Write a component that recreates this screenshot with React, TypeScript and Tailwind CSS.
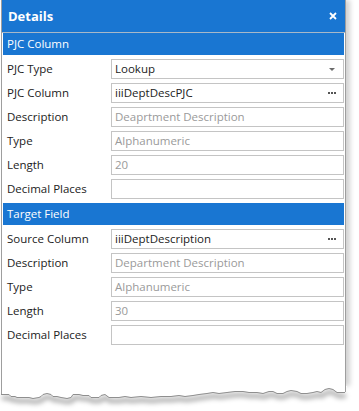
import { ReactNode } from "react";

type Row = {
  label: string;
  value?: string;
  placeholder?: string;
  kind?: "select" | "lookup";
};

const pjcRows: Row[] = [
  { label: "PJC Type", value: "Lookup", kind: "select" },
  { label: "PJC Column", value: "iiiDeptDescPJC", kind: "lookup" },
  { label: "Description", placeholder: "Deaprtment Description" },
  { label: "Type", placeholder: "Alphanumeric" },
  { label: "Length", placeholder: "20" },
  { label: "Decimal Places" },
];

const targetRows: Row[] = [
  { label: "Source Column", value: "iiiDeptDescription", kind: "lookup" },
  { label: "Description", placeholder: "Department Description" },
  { label: "Type", placeholder: "Alphanumeric" },
  { label: "Length", placeholder: "30" },
  { label: "Decimal Places" },
];

function SectionBar({ children }: { children: ReactNode }) {
  return (
    <div className="h-[22px] bg-[#1976d2] pl-[4px] flex items-center text-white text-[11.5px] leading-none">
      {children}
    </div>
  );
}

function Field({ row }: { row: Row }) {
  return (
    <div className="h-[24px] flex items-center">
      <div className="w-[108px] pl-[4px] text-[11.5px] text-[#222] leading-none">{row.label}</div>
      <div className="w-[233px] h-[20px] border border-[#c4c4c4] bg-white flex items-center pl-[3px] pr-[5px] text-[11.5px] leading-none">
        <span className={"flex-1 " + (row.value ? "text-[#222]" : "text-[#9a9a9a]")}>
          {row.value ?? row.placeholder ?? ""}
        </span>
        {row.kind === "select" && (
          <svg width="6" height="3" viewBox="0 0 6 3" className="mr-[3px]">
            <path d="M0 0H6L3 3Z" fill="#6b6b6b" />
          </svg>
        )}
        {row.kind === "lookup" && (
          <svg width="9" height="3" viewBox="0 0 9 3" className="mr-[1px]">
            <rect x="0" y="0" width="2" height="2" fill="#555" />
            <rect x="3" y="0" width="2" height="2" fill="#555" />
            <rect x="6" y="0" width="2" height="2" fill="#555" />
          </svg>
        )}
      </div>
    </div>
  );
}

function TornEdge() {
  const pts =
    "0,8 8,8 10,10 14,10 16,11 28,11 32,12 38,11 40,10 42,8 46,7 50,8 52,10 56,10 60,11 66,12 70,11 72,8 78,8 82,9 88,9 90,11 98,11 100,9 104,8 108,11 118,11 124,10 130,11 140,10 150,11 160,10 170,10 178,9 184,10 192,9 198,8 206,7 212,6 218,7 226,6 234,5 242,5 248,6 256,6 262,7 268,5 272,5 276,7 282,7 286,5 290,4 296,5 300,7 306,7 312,6 316,5 320,6 324,3 328,2 332,3 336,6 340,6 344,6";
  return (
    <svg width="359" height="26" viewBox="0 0 359 26" className="block">
      <defs>
        <filter id="blur" x="-10%" y="-50%" width="120%" height="300%">
          <feGaussianBlur stdDeviation="2.5" />
        </filter>
      </defs>
      <polyline
        points={pts.split(" ").map((p) => { const [x, y] = p.split(","); return `${+x + 2},${+y + 4}`; }).join(" ")}
        fill="none"
        stroke="rgba(0,0,0,0.35)"
        strokeWidth="4"
        filter="url(#blur)"
      />
      <polygon points={`0,0 346,0 ${pts.split(" ").reverse().join(" ")}`} fill="#fff" transform="translate(1,0)" />
      <path d="M1.5 0V8" stroke="#9e9e9e" />
      <path d="M345.5 0V6" stroke="#9e9e9e" />
      <polyline points={pts} fill="none" stroke="#8f8f8f" strokeWidth="1" transform="translate(1,0.5)" />
    </svg>
  );
}

export default function App() {
  return (
    <div
      className="w-[359px] h-[411px] bg-white overflow-hidden"
      style={{ fontFamily: '"Open Sans", "Noto Sans", sans-serif' }}
    >
      <div className="ml-[1px] w-[345px] h-[386px] border-x border-[#9e9e9e] bg-white shadow-[4px_0_5px_rgba(0,0,0,0.18)] flex flex-col">
        <div className="h-[33px] bg-[#1976d2] border-b border-[#a8b8c8] flex items-center justify-between pl-[6px] pr-[8px]">
          <span className="text-white font-bold text-[13px] leading-none">Details</span>
          <svg width="8" height="8" viewBox="0 0 8 8">
            <path d="M1 1L7 7M7 1L1 7" stroke="#fff" strokeWidth="1.8" />
          </svg>
        </div>
        <div className="px-px">
          <SectionBar>PJC Column</SectionBar>
          <div className="py-[2px]">
            {pjcRows.map((r) => (
              <Field key={r.label} row={r} />
            ))}
          </div>
          <SectionBar>Target Field</SectionBar>
          <div className="py-[2px]">
            {targetRows.map((r) => (
              <Field key={r.label} row={r} />
            ))}
          </div>
        </div>
      </div>
      <TornEdge />
    </div>
  );
}
